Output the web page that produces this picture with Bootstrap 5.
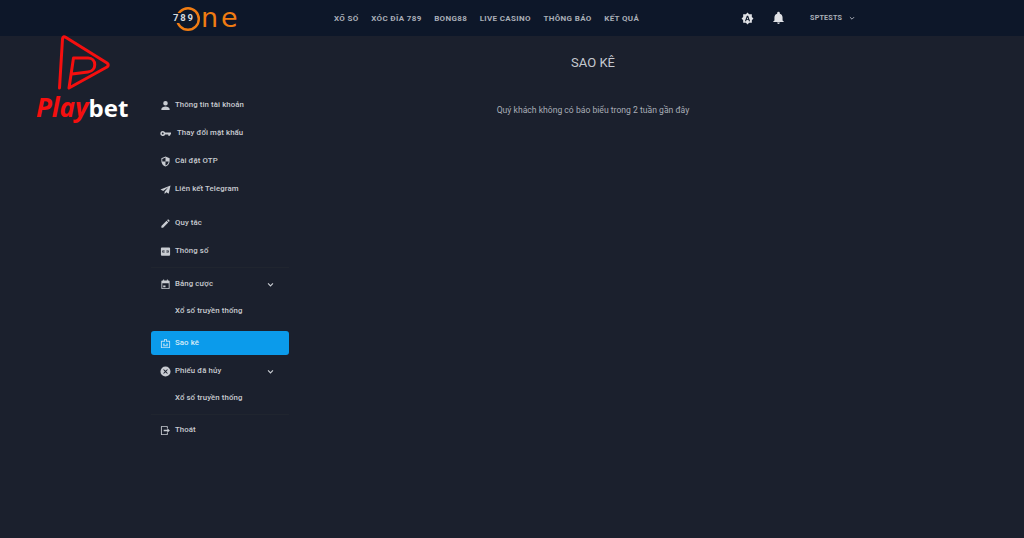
<!DOCTYPE html>
<html lang="vi">

<head>
  <meta charset="UTF-8">
  <meta name="viewport" content="width=device-width, initial-scale=1.0">
  <title>Sao kê</title>

  <link href="https://cdn.jsdelivr.net/npm/bootstrap@5.3.0/dist/css/bootstrap.min.css" rel="stylesheet">

  <style>
    body {
      background-color: #1b202d;
      color: #c9ccd2;
      font-family: Roboto, "Liberation Sans", sans-serif;
      min-height: 538px;
      position: relative;
      overflow: hidden;
    }

    /* Header */
    .top-bar {
      height: 36px;
      background-color: #0d1729;
      padding-left: 173px;
    }

    .brand-logo {
      width: 161px;
      height: 36px;
      color: #f07c12;
      text-decoration: none;
    }

    .brand-ring {
      position: relative;
      width: 28px;
      height: 24px;
    }

    .brand-num {
      position: absolute;
      left: 0;
      top: 7px;
      font-size: 9.500px;
      line-height: 10px;
      font-weight: 700;
      letter-spacing: 1.800px;
      color: #d8dadd;
      background-color: #0d1729;
    }

    .brand-text {
      font-family: "DejaVu Sans", sans-serif;
      font-size: 27px;
      line-height: 32px;
      letter-spacing: 3px;
    }

    .top-menu {
      gap: 12.500px;
      width: 407px;
      margin-top: 1px;
    }

    .top-menu a {
      color: #a9aeb7;
      font-size: 8px;
      font-weight: 700;
      letter-spacing: .35px;
      text-decoration: none;
      white-space: nowrap;
    }

    .top-tools {
      color: #dfe1e5;
    }

    .bell-icon {
      margin-left: 18px;
    }

    .user-name {
      margin-left: 25px;
      margin-right: 7px;
      color: #a9aeb7;
      font-size: 7.200px;
      font-weight: 700;
      letter-spacing: .2px;
    }

    .user-arrow {
      color: #a9aeb7;
    }

    /* Side menu */
    .page-body {
      padding-left: 151px;
    }

    .side-menu {
      width: 138px;
      padding-top: 55px;
      flex-shrink: 0;
    }

    .side-menu .nav-link {
      height: 28px;
      padding: 0 0 0 9px;
      color: #c9ccd2;
      font-size: 7.800px;
      font-weight: 500;
      letter-spacing: .1px;
      border-radius: 3px;
      display: flex;
      align-items: center;
    }

    .side-menu .nav-link.active {
      background-color: #0b9beb;
      color: #d9ecf7;
      height: 24px;
      margin: 6px 0 2px;
    }

    .side-menu svg.item-icon {
      width: 11px;
      height: 11px;
      margin-right: 4px;
      flex-shrink: 0;
      fill: #c9ccd2;
    }

    .side-menu .nav-link.active svg.item-icon {
      fill: #bfe0f5;
    }

    .side-menu .sub-link {
      padding: 0 0 2px 24px;
      height: 27px;
    }

    .side-menu .shifted {
      margin-left: 2px;
    }

    .side-menu .arrow {
      margin-left: auto;
      margin-right: 15px;
    }

    .menu-gap {
      height: 6px;
    }

    .menu-line {
      height: 1px;
      margin: 2px 0;
      background-color: #20252f;
    }

    .menu-line.line-end {
      margin-bottom: 1px;
    }

    /* Content */
    .page-content {
      width: 608px;
      padding-top: 18px;
    }

    .page-title {
      font-size: 13px;
      line-height: 18px;
      font-weight: 400;
      color: #c5c9d0;
      margin-bottom: 32px;
    }

    .page-empty {
      font-size: 8.600px;
      line-height: 12px;
      color: #a9aeb7;
    }

    /* Logo over the page */
    .playbet-mark {
      position: absolute;
      left: 36px;
      top: 34px;
      width: 96px;
    }

    .playbet-mark svg {
      display: block;
      margin-left: 21px;
    }

    .playbet-name {
      font-family: "Open Sans", Lato, sans-serif;
      font-size: 24px;
      line-height: 26px;
      font-weight: 700;
      color: #fff;
      margin-top: 2px;
      white-space: nowrap;
    }

    .playbet-name i {
      color: #f50f0f;
      font-size: 26px;
    }
  </style>
</head>

<body>
  <header class="top-bar d-flex align-items-center">
    <a class="brand-logo d-flex align-items-center" href="#">
      <span class="brand-ring d-block">
        <svg width="28" height="24" viewBox="0 0 28 24" fill="none" stroke="#f07c12" stroke-width="2.400">
          <circle cx="15" cy="12" r="10.800"/>
        </svg>
        <span class="brand-num">789</span>
      </span>
      <span class="brand-text">ne</span>
    </a>
    <nav class="top-menu d-flex">
      <a href="#">XỔ SỐ</a>
      <a href="#">XÓC ĐĨA 789</a>
      <a href="#">BONG88</a>
      <a href="#">LIVE CASINO</a>
      <a href="#">THÔNG BÁO</a>
      <a href="#">KẾT QUẢ</a>
    </nav>
    <div class="top-tools d-flex align-items-center">
      <svg width="13" height="13" viewBox="0 0 24 24" fill="currentColor">
        <path fill-rule="evenodd" d="M12 1l3 3h5v5l3 3-3 3v5h-5l-3 3-3-3H4v-5l-3-3 3-3V4h5zM10.800 7l-3.600 10h2.200l.7-2.200h3.800l.7 2.200h2.200L13.200 7zm1.200 2.800l1.300 3.400h-2.600z"/>
      </svg>
      <svg class="bell-icon" width="13" height="14" viewBox="0 0 24 24" fill="currentColor">
        <path d="M12 23a2.500 2.500 0 0 0 2.500-2.500h-5A2.500 2.500 0 0 0 12 23zm7.500-6.500V11c0-3.400-1.800-6.200-5-7V3a2.500 2.500 0 0 0-5 0v1c-3.200.8-5 3.600-5 7v5.500L2 19v.5h20V19z"/>
      </svg>
      <span class="user-name">SPTESTS</span>
      <svg class="user-arrow" width="6" height="6" viewBox="0 0 10 10" fill="none" stroke="currentColor" stroke-width="1.600"><path d="M1.500 3.500L5 7l3.500-3.500"/></svg>
    </div>
  </header>

  <div class="page-body d-flex">
    <aside class="side-menu">
      <nav class="nav flex-column">
        <a class="nav-link" href="#">
          <svg class="item-icon" viewBox="0 0 24 24"><path d="M12 12a5 5 0 1 0 0-10 5 5 0 0 0 0 10zm0 2c-4 0-9 2-9 5.500V22h18v-2.500C21 16 16 14 12 14z"/></svg>
          Thông tin tài khoản
        </a>
        <a class="nav-link" href="#">
          <svg class="item-icon" viewBox="0 0 24 24"><path fill-rule="evenodd" d="M6 6.500a5.500 5.500 0 0 1 5.200 3.500H24v4h-2v3h-4v-3h-6.800A5.500 5.500 0 1 1 6 6.500zm0 3.500a2 2 0 1 0 0 4 2 2 0 0 0 0-4z"/></svg>
          <span class="shifted">Thay đổi mật khẩu</span>
        </a>
        <a class="nav-link" href="#">
          <svg class="item-icon" viewBox="0 0 24 24"><path fill-rule="evenodd" d="M12 1L3 5v6c0 5.600 3.800 10.700 9 12 5.200-1.300 9-6.400 9-12V5zm0 11h7c-.5 4.100-3.300 7.800-7 8.900V12H5V6.300l7-3.100z"/></svg>
          Cài đặt OTP
        </a>
        <a class="nav-link" href="#">
          <svg class="item-icon" viewBox="0 0 24 24"><path d="M23 3L1 12l6 3 11-8-8 10v5l4-4 5 3z"/></svg>
          Liên kết Telegram
        </a>
        <div class="menu-gap"></div>
        <a class="nav-link" href="#">
          <svg class="item-icon" viewBox="0 0 24 24"><path d="M3 17.300V21h3.700L18 9.700 14.300 6zM20.700 7a1 1 0 0 0 0-1.400l-2.300-2.300a1 1 0 0 0-1.400 0L15.500 4.800l3.700 3.700z"/></svg>
          Quy tắc
        </a>
        <a class="nav-link" href="#">
          <svg class="item-icon" viewBox="0 0 24 24"><path fill-rule="evenodd" d="M4 3h16a2 2 0 0 1 2 2v14a2 2 0 0 1-2 2H4a2 2 0 0 1-2-2V5a2 2 0 0 1 2-2zm1 7v4h5v-1.500H6.500v-1H10V10zm9 0v1.500h3.500v1H14V14h5v-4z"/></svg>
          Thông số
        </a>
        <div class="menu-line"></div>
        <a class="nav-link" href="#">
          <svg class="item-icon" viewBox="0 0 24 24"><path fill-rule="evenodd" d="M7 1h2v2h6V1h2v2h2a2 2 0 0 1 2 2v15a2 2 0 0 1-2 2H5a2 2 0 0 1-2-2V5a2 2 0 0 1 2-2h2zM5 9v11h14V9zm2 5h5v4H7z"/></svg>
          Bảng cược
          <svg class="arrow" width="7" height="7" viewBox="0 0 10 10" fill="none" stroke="#c9ccd2" stroke-width="1.600"><path d="M1.500 3.500L5 7l3.500-3.500"/></svg>
        </a>
        <a class="nav-link sub-link" href="#">Xổ số truyền thống</a>
        <a class="nav-link active" href="#">
          <svg class="item-icon" viewBox="0 0 24 24"><path fill-rule="evenodd" d="M9 2h6v4h6a1 1 0 0 1 1 1v14a1 1 0 0 1-1 1H3a1 1 0 0 1-1-1V7a1 1 0 0 1 1-1h6zm2 2v4h2V4zM4 8v12h16V8zm3 4h3v3H7zm7 0h3v3h-3zm-7 4h10v2H7z"/></svg>
          Sao kê
        </a>
        <a class="nav-link" href="#">
          <svg class="item-icon" viewBox="0 0 24 24"><path fill-rule="evenodd" d="M12 1a11 11 0 1 1 0 22 11 11 0 0 1 0-22zM8.400 7L7 8.400l3.600 3.600L7 15.600 8.400 17l3.600-3.600 3.600 3.600 1.400-1.400-3.600-3.600L17 8.400 15.600 7 12 10.600z"/></svg>
          Phiếu đã hủy
          <svg class="arrow" width="7" height="7" viewBox="0 0 10 10" fill="none" stroke="#c9ccd2" stroke-width="1.600"><path d="M1.500 3.500L5 7l3.500-3.500"/></svg>
        </a>
        <a class="nav-link sub-link" href="#">Xổ số truyền thống</a>
        <div class="menu-line line-end"></div>
        <a class="nav-link" href="#">
          <svg class="item-icon" viewBox="0 0 24 24"><path fill-rule="evenodd" d="M4 2h11a2 2 0 0 1 2 2v3h-2V4H4v16h11v-3h2v3a2 2 0 0 1-2 2H4a2 2 0 0 1-2-2V4a2 2 0 0 1 2-2zm12 5l5.500 5-5.500 5v-3.500H8v-3h8z"/></svg>
          Thoát
        </a>
      </nav>
    </aside>

    <main class="page-content text-center">
      <h1 class="page-title">SAO KÊ</h1>
      <p class="page-empty">Quý khách không có báo biểu trong 2 tuần gần đây</p>
    </main>
  </div>

  <div class="playbet-mark">
    <svg width="54" height="58" viewBox="0 0 54 58" fill="none" stroke="#f50f0f" stroke-width="3" stroke-linejoin="round" stroke-linecap="round">
      <path d="M2.500 54L5.500 5Q5.800 1.500 9 3.500L50 29Q52.500 31 50 33L12 54L16.500 24H31C40 24 40 37 31 38L15 40"/>
    </svg>
    <div class="playbet-name"><i>Play</i>bet</div>
  </div>

  <script src="https://cdn.jsdelivr.net/npm/bootstrap@5.3.0/dist/js/bootstrap.bundle.min.js"></script>
</body>

</html>
